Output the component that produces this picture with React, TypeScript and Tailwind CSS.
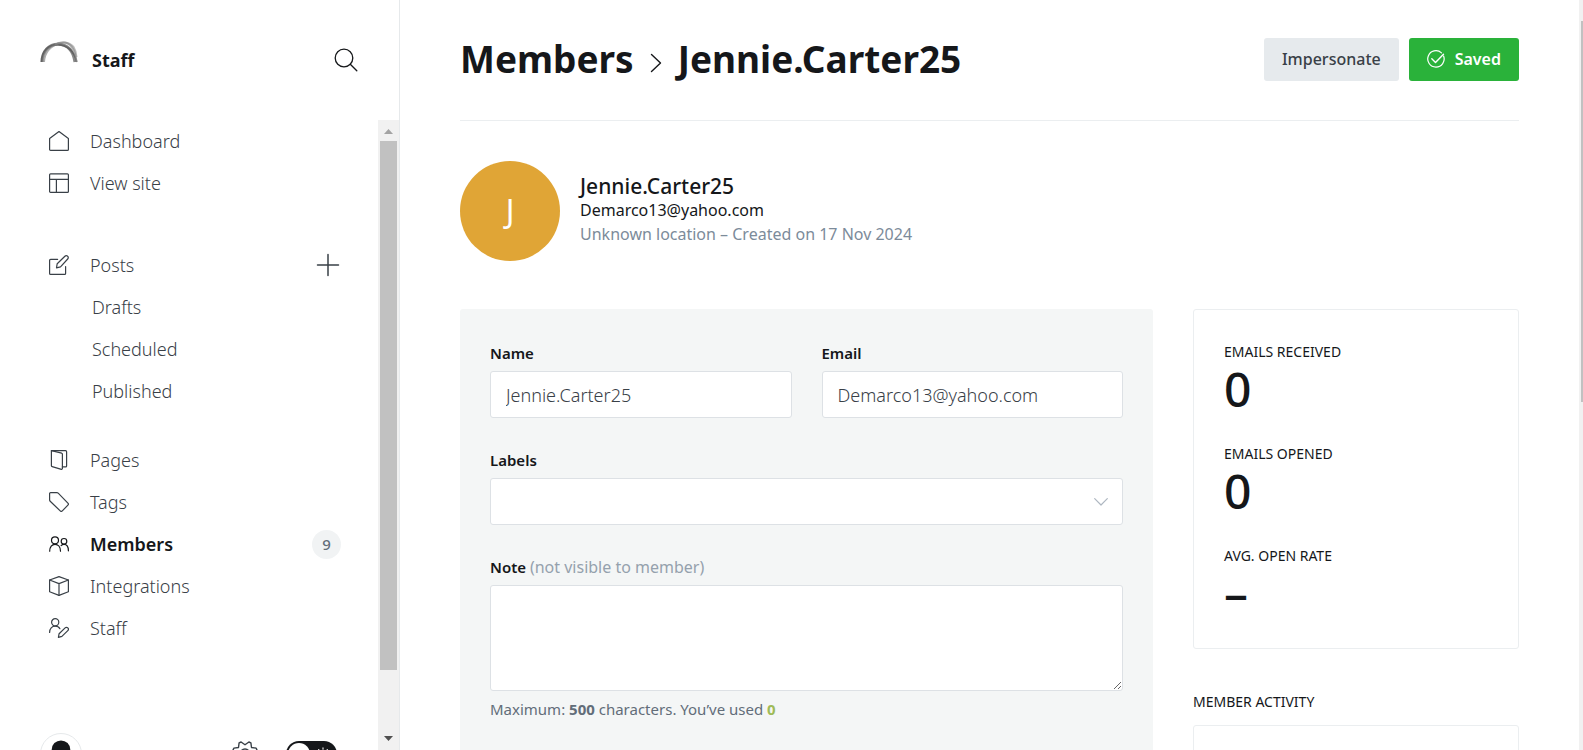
import type { ReactNode } from "react";

type IconProps = { children: ReactNode; className?: string; box?: string };

function Icon({ children, className = "size-5", box = "0 0 20 20" }: IconProps) {
  return (
    <svg
      viewBox={box}
      className={`shrink-0 ${className}`}
      fill="none"
      stroke="currentColor"
      strokeWidth="1.2"
      strokeLinecap="round"
      strokeLinejoin="round"
      aria-hidden="true"
    >
      {children}
    </svg>
  );
}

const icons: Record<string, ReactNode> = {
  home: <path d="M.6 7.600 10 .6l9.400 7v10.800a1 1 0 0 1-1 1H1.600a1 1 0 0 1-1-1z" />,
  layout: (
    <>
      <rect x=".6" y=".8" width="18.800" height="18.600" rx="1" />
      <path d="M.6 6.400h18.800M7.400 6.400v13" />
    </>
  ),
  edit: (
    <>
      <path d="M8.600 4.400H1.600a1 1 0 0 0-1 1v13a1 1 0 0 0 1 1h14a1 1 0 0 0 1-1v-6.800" />
      <path d="m11.500 11.900-4 .9.7-4.100 7.700-7.500a1.900 1.900 0 0 1 2.700 0c.9.800.9 2 .1 2.800z" />
    </>
  ),
  pages: (
    <>
      <path d="M2.400.700v14.900a1 1 0 0 0 .8 1l9.200 2.700a.8.800 0 0 0 1-.8V4.200a1 1 0 0 0-.7-1z" />
      <path d="M2.400.700h14.200a1 1 0 0 1 1 1v14.200a1 1 0 0 1-1 1h-3.200" />
    </>
  ),
  tag: <path d="M.6 1.600a1 1 0 0 1 1-1h6.100a2 2 0 0 1 1.500.6l9.700 9.900a1.500 1.500 0 0 1 0 2.100l-5.600 5.700a1.500 1.500 0 0 1-2.100 0L1.200 9.200a2 2 0 0 1-.6-1.500z" />,
  members: (
    <>
      <circle cx="6" cy="6.300" r="3.500" />
      <path d="M.7 17.200c0-4.200 2.200-6.900 5.300-6.900s5.500 2.700 5.500 6.900" />
      <circle cx="15" cy="7.300" r="2.800" />
      <path d="M12.100 11.600c.8-.8 1.800-1.200 2.900-1.200 2.600 0 4.400 2.600 4.400 6.400" />
    </>
  ),
  box: (
    <>
      <path d="M10 .6 19.400 4v11.800L10 19.400.6 15.800V4z" />
      <path d="M.6 4 10 7.600 19.400 4M10 7.600v11.800" />
    </>
  ),
  staff: (
    <>
      <circle cx="6.200" cy="4.300" r="3.600" />
      <path d="M.6 14.400c0-3.800 2.400-6.200 5.600-6.200 2 0 3.700.8 4.700 2.500" />
      <path d="m12.900 18.400-3.500 1 .7-3.700 6-5.800a1.900 1.900 0 0 1 2.700 0c.8.800.8 1.900 0 2.700z" />
    </>
  ),
};

function NavItem({ icon, label, active = false, children }: { icon: string; label: string; active?: boolean; children?: ReactNode }) {
  return (
    <li className="flex h-[42px] items-center justify-between pr-[37px]">
      <a
        href="#"
        aria-current={active ? "page" : undefined}
        className={`flex items-center gap-[21px] ${active ? "font-semibold text-[#15171a]" : "font-light text-[#394047]"}`}
      >
        <Icon>{icons[icon]}</Icon>
        {label}
      </a>
      {children}
    </li>
  );
}

function SubItem({ label }: { label: string }) {
  return (
    <li className="flex h-[42px] items-center pl-[43px] font-light text-[#394047]">
      <a href="#">{label}</a>
    </li>
  );
}

function Logo() {
  return (
    <svg viewBox="0 0 38 22" className="h-[22px] w-[38px]" fill="none" aria-hidden="true">
      <path d="M2 21C2 10 9 3.200 18 3.200S33 8 35 21" stroke="#555" strokeOpacity=".7" strokeWidth="3" />
      <path d="M1.500 21C1.500 10 9 3 18 3.600S34 10 37 21" stroke="#444" strokeOpacity=".55" strokeWidth="1.800" />
      <path d="M4 21C4.500 12 10 5 20 2s16 7 16 19" stroke="#777" strokeOpacity=".6" strokeWidth="2" />
      <path d="M15 3.500C20 .2 29 .6 33.500 6c2 3 2.800 7 3 10" stroke="#888" strokeOpacity=".6" strokeWidth="2" />
    </svg>
  );
}

function Sidebar() {
  return (
    <aside className="flex w-[400px] shrink-0 flex-col border-r border-[#e6e9eb] text-[18px]">
      <header className="flex h-[120px] shrink-0 items-center justify-between pr-[41px] pl-10">
        <a href="#" className="flex items-center gap-[14px] font-bold text-[#15171a]">
          <span className="pb-4">
            <Logo />
          </span>
          Staff
        </a>
        <button type="button" aria-label="Search" className="text-[#15171a]">
          <Icon className="size-6" box="0 0 24 24">
            <circle cx="10" cy="10" r="8.800" strokeWidth="1.300" />
            <path d="m16.300 16.300 6.500 6.500" strokeWidth="1.300" />
          </Icon>
        </button>
      </header>
      <div className="flex min-h-0 grow">
        <div className="flex grow flex-col overflow-hidden">
          <nav className="flex flex-col gap-10 pl-[49px] leading-6">
            <ul>
              <NavItem icon="home" label="Dashboard" />
              <NavItem icon="layout" label="View site" />
            </ul>
            <ul>
              <NavItem icon="edit" label="Posts">
                <button type="button" aria-label="New post" className="mr-px text-[#394047]">
                  <Icon className="size-6" box="0 0 24 24">
                    <path d="M12 1.500v21M1.500 12h21" strokeWidth="1.500" />
                  </Icon>
                </button>
              </NavItem>
              <SubItem label="Drafts" />
              <SubItem label="Scheduled" />
              <SubItem label="Published" />
            </ul>
            <ul className="-mt-[13px]">
              <NavItem icon="pages" label="Pages" />
              <NavItem icon="tag" label="Tags" />
              <NavItem icon="members" label="Members" active>
                <span className="grid size-[29px] place-items-center rounded-full bg-[#f1f3f4] text-[15px] font-medium text-[#626d79]">9</span>
              </NavItem>
              <NavItem icon="box" label="Integrations" />
              <NavItem icon="staff" label="Staff" />
            </ul>
          </nav>
          <div className="mt-[84px] flex shrink-0 items-center pr-[41px] pl-10">
            <button type="button" aria-label="Account" className="grid size-[42px] place-items-center rounded-full border border-[#e6e9eb] text-[#15171a]">
              <svg viewBox="0 0 42 42" className="size-10" aria-hidden="true">
                <circle cx="21" cy="16.500" r="9.800" fill="currentColor" />
                <path d="M7 38c0-14 28-14 28 0z" fill="currentColor" />
              </svg>
            </button>
            <button type="button" aria-label="Settings" className="mr-[27px] ml-auto text-[#394047]">
              <Icon className="size-7" box="-14 -14 28 28">
                <circle r="5" strokeWidth="1.400" />
                <path
                  d="M0-9.200 3.900-12 5.900-11.100 6.500-6.500 11.100-5.900 12-3.900 9.200 0 12 3.900 11.100 5.900 6.500 6.500 5.900 11.100 3.900 12 0 9.200-3.900 12-5.900 11.100-6.500 6.500-11.100 5.900-12 3.900-9.200 0-12-3.900-11.100-5.900-6.500-6.500-5.900-11.100-3.900-12z"
                  strokeWidth="1.400"
                />
              </Icon>
            </button>
            <button type="button" role="switch" aria-checked="false" aria-label="Dark mode" className="flex h-[26px] w-[51px] items-center justify-between rounded-full bg-[#15171a] px-[2px] text-white">
              <span className="size-[22px] rounded-full bg-white" />
              <Icon className="mr-[5px] size-[14px]" box="0 0 16 16">
                <circle cx="8" cy="8" r="3" />
                <path d="M8 1v1.500M8 13.500V15M1 8h1.500M13.500 8H15M3 3l1 1M12 12l1 1M3 13l1-1M12 4l1-1" />
              </Icon>
            </button>
          </div>
        </div>
        <div aria-hidden="true" className="flex w-[21px] shrink-0 flex-col items-center bg-[#f1f1f1]">
          <svg viewBox="0 0 21 21" className="size-[21px]">
            <path d="M6 14h9l-4.500-5z" fill="#a3a3a3" />
          </svg>
          <div className="w-[17px] grow bg-[#c1c1c1]" />
          <svg viewBox="0 0 21 80" className="h-20 w-[21px]">
            <path d="M6 66h9l-4.500 5z" fill="#505050" />
          </svg>
        </div>
      </div>
    </aside>
  );
}

const field =
  "w-full rounded-[3px] border border-[#dde1e5] bg-white px-[15px] text-[18px] font-light text-[#394047]";

function Stat({ label, value }: { label: string; value: string }) {
  return (
    <div>
      <dt className="text-[14px] leading-5 uppercase">{label}</dt>
      <dd className="text-[48px] leading-[54px] font-medium">{value}</dd>
    </div>
  );
}

function Member() {
  return (
    <main className="min-w-0 grow overflow-hidden px-[60px] text-[#15171a]">
      <header className="flex h-[121px] items-center justify-between border-b border-[#ebeef0] pb-[2px]">
        <h1 className="flex items-center text-[37px] leading-[50px] font-bold">
          <a href="#">Members</a>
          <Icon className="mx-4 mt-2 h-5 w-3" box="0 0 12 20">
            <path d="m1.500 1.500 9 8.500-9 8.500" strokeWidth="1.400" />
          </Icon>
          Jennie.Carter25
        </h1>
        <div className="flex gap-[10px] text-[16px]">
          <button type="button" className="h-[43px] rounded-[3px] bg-[#e6eaed] px-[18px] font-medium text-[#394047]">
            Impersonate
          </button>
          <button type="button" className="flex h-[43px] items-center gap-[10px] rounded-[3px] bg-[#2ab23a] px-[18px] font-semibold text-white">
            <Icon className="size-[18px]" box="0 0 18 18">
              <path d="M16.600 6A8.200 8.200 0 1 1 14.500 2.900" />
              <path d="m4.800 8.800 3.700 3.700 8-8.300" strokeWidth="1.400" />
            </Icon>
            Saved
          </button>
        </div>
      </header>

      <section className="mt-10 flex items-center gap-5">
        <span className="grid size-[100px] shrink-0 place-items-center rounded-full bg-[#e0a536] text-[32px] text-white">J</span>
        <div className="pb-[2px] text-[16px] leading-6">
          <h2 className="text-[21px] font-medium">Jennie.Carter25</h2>
          <p>Demarco13@yahoo.com</p>
          <p className="text-[#7c8b9a]">Unknown location – Created on 17 Nov 2024</p>
        </div>
      </section>

      <div className="mt-12 flex items-start gap-10">
        <form className="min-w-0 grow rounded-[3px] bg-[#f4f6f6] px-[30px] pt-[34px] pb-20 text-[15px] leading-5">
          <div className="grid grid-cols-2 gap-[30px]">
            <div>
              <label htmlFor="name" className="mb-2 block font-semibold">Name</label>
              <input id="name" defaultValue="Jennie.Carter25" className={`h-[47px] ${field}`} />
            </div>
            <div>
              <label htmlFor="email" className="mb-2 block font-semibold">Email</label>
              <input id="email" type="email" defaultValue="Demarco13@yahoo.com" className={`h-[47px] ${field}`} />
            </div>
          </div>
          <div className="mt-8">
            <label htmlFor="labels" className="mb-2 block font-semibold">Labels</label>
            <div className="relative">
              <select id="labels" className={`block h-[47px] appearance-none ${field}`} />
              <Icon className="pointer-events-none absolute top-5 right-[15px] h-2 w-[14px] text-[#aeb7c1]" box="0 0 14 8">
                <path d="m.7.7 6.300 6.300L13.300.7" />
              </Icon>
            </div>
          </div>
          <div className="mt-8">
            <label htmlFor="note" className="mb-2 block font-semibold">
              Note <span className="text-[16px] font-normal text-[#95a1ad]">(not visible to member)</span>
            </label>
            <textarea id="note" className={`block h-[106px] resize-y ${field}`} />
            <p className="mt-2 text-[#626d79]">
              Maximum: <b>500</b> characters. You’ve used <b className="text-[#9fbb58]">0</b>
            </p>
          </div>
        </form>

        <aside className="w-[326px] shrink-0">
          <dl className="flex flex-col gap-7 rounded-[3px] border border-[#ebeef0] px-[30px] pt-8 pb-7">
            <Stat label="Emails received" value="0" />
            <Stat label="Emails opened" value="0" />
            <Stat label="Avg. open rate" value="–" />
          </dl>
          <h3 className="mt-[43px] text-[14px] leading-5 uppercase">Member activity</h3>
          <div className="mt-[13px] h-[300px] rounded-[3px] border border-[#ebeef0]" />
        </aside>
      </div>
    </main>
  );
}

export default function App() {
  return (
    <div className="flex h-screen overflow-hidden bg-white font-['Noto_Sans',sans-serif]">
      <Sidebar />
      <Member />
      <div aria-hidden="true" className="w-1 shrink-0 bg-[#f1f1f1] pt-[21px] pl-[2px]">
        <div className="h-[381px] bg-[#c1c1c1]" />
      </div>
    </div>
  );
}
